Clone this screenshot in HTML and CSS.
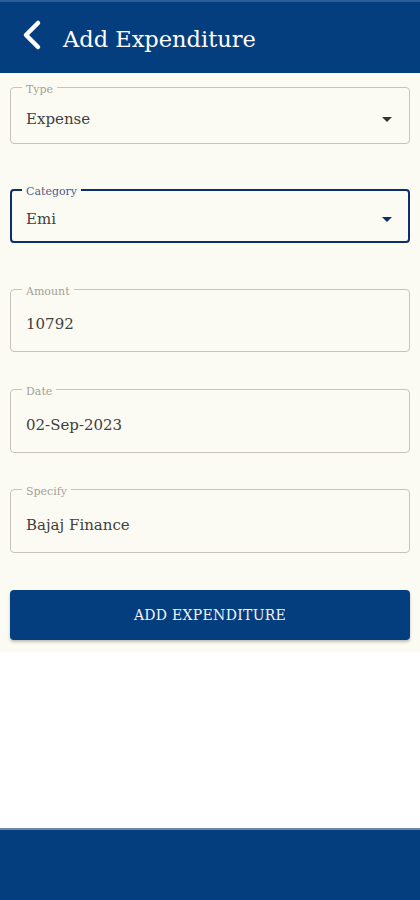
FILE: index.html
```html
<!DOCTYPE html>
<html lang="en">
<head>
    <meta charset="UTF-8">
    <meta name="viewport" content="width=device-width, initial-scale=1.0">
    <title>Add Expenditure</title>
    <link rel="stylesheet" href="styles.css">
</head>
<body>
    <div class="app">
        <header class="topbar">
            <button class="back-btn" aria-label="Back">
                <svg width="24" height="32" viewBox="0 0 24 32">
                    <polyline points="18,4 6,16 18,28" fill="none" stroke="#fff" stroke-width="4.5" stroke-linecap="round" stroke-linejoin="round"/>
                </svg>
            </button>
            <h1 class="title">Add Expenditure</h1>
        </header>

        <main class="form">
            <div class="field field-type">
                <span class="field-label">Type</span>
                <div class="field-value">
                    <span>Expense</span>
                    <span class="caret"></span>
                </div>
            </div>

            <div class="field field-category active">
                <span class="field-label">Category</span>
                <div class="field-value">
                    <span>Emi</span>
                    <span class="caret"></span>
                </div>
            </div>

            <div class="field field-amount">
                <span class="field-label">Amount</span>
                <div class="field-value">
                    <span>10792</span>
                </div>
            </div>

            <div class="field field-date">
                <span class="field-label">Date</span>
                <div class="field-value">
                    <span>02-Sep-2023</span>
                </div>
            </div>

            <div class="field field-specify">
                <span class="field-label">Specify</span>
                <div class="field-value">
                    <span>Bajaj Finance</span>
                </div>
            </div>

            <button class="submit-btn">ADD EXPENDITURE</button>
        </main>

        <div class="spacer"></div>

        <footer class="bottombar"></footer>
    </div>
</body>
</html>
```

FILE: styles.css
```css
body {
    margin: 0;
    font-family: "DejaVu Serif", "Liberation Serif", serif;
    background: #ffffff;
}
.app {
    height: 900px;
    display: flex;
    flex-direction: column;
}
.topbar {
    height: 71px;
    border-top: 2px solid #2b5c93;
    background: #053e7e;
    display: flex;
    align-items: center;
    padding: 0 0 0 20px;
}
.back-btn {
    background: none;
    border: none;
    padding: 0;
    width: 24px;
    height: 32px;
    margin-top: -6px;
    cursor: pointer;
}
.title {
    margin: 2px 0 0 19px;
    color: #ffffff;
    font-size: 22.5px;
    font-weight: normal;
}
.form {
    background: #fcfbf3;
    padding: 14px 10px 12px;
    display: flex;
    flex-direction: column;
}
.field {
    border: 1px solid #c6c3ba;
    border-radius: 4px;
    padding: 0 15px;
    display: flex;
    flex-direction: column;
    box-sizing: border-box;
}
.field-label {
    align-self: flex-start;
    margin: -5px 0 -2px -4px;
    padding: 0 4px;
    background: #fcfbf3;
    font-size: 11px;
    line-height: 14px;
    color: #a3a199;
}
.field-value {
    flex: 1;
    display: flex;
    align-items: center;
    justify-content: space-between;
    font-size: 15px;
    color: #404040;
}
.caret {
    width: 0;
    height: 0;
    margin-right: 2px;
    border-left: 5px solid transparent;
    border-right: 5px solid transparent;
    border-top: 5px solid #333;
}
.field-type {
    height: 57px;
}
.field-category {
    height: 54px;
    margin-top: 45px;
}
.field.active {
    border: 2px solid #0b2f6e;
    padding: 0 14px;
}
.field.active .field-label {
    color: #4a5d8c;
    margin-top: -6px;
}
.field.active .caret {
    border-top-color: #0b2f6e;
}
.field-amount {
    height: 63px;
    margin-top: 46px;
}
.field-date {
    height: 64px;
    margin-top: 37px;
}
.field-specify {
    height: 64px;
    margin-top: 36px;
}
.submit-btn {
    margin-top: 37px;
    height: 50px;
    border: none;
    border-radius: 4px;
    background: #053e7e;
    color: #f2f4f8;
    font-family: inherit;
    font-size: 14px;
    letter-spacing: 0.3px;
    box-shadow: 0 2px 3px rgba(0, 0, 0, 0.25);
    cursor: pointer;
}
.spacer {
    flex: 1;
}
.bottombar {
    height: 70px;
    border-top: 2px solid #6f88a8;
    background: #053e7e;
}
```
